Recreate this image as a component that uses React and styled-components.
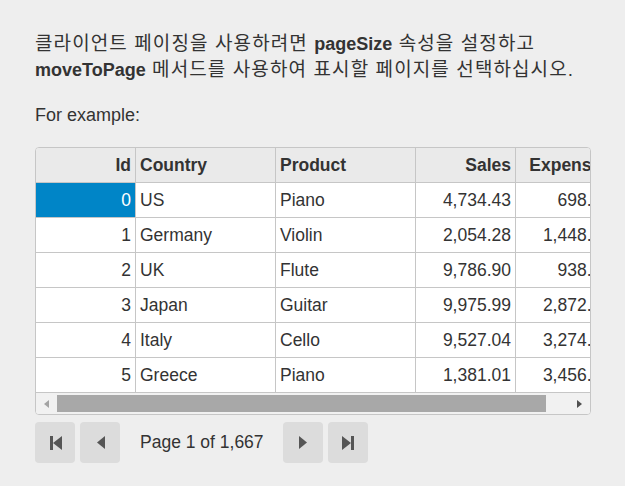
import React from 'react';
import styled, { createGlobalStyle } from 'styled-components';

const GlobalStyle = createGlobalStyle`
  html, body {
    margin: 0;
    background: #eeeeee;
  }
  body {
    font-family: "Liberation Sans", "Noto Sans CJK KR", sans-serif;
    color: #333333;
  }
`;

const Page = styled.div`
  width: 556px;
  padding: 31px 0 0 35px;
`;

const Para = styled.p`
  margin: 0 0 ${p => p.$gap}px;
  font-size: 18px;
  line-height: 25px;
`;

const Ko = styled.span`
  font-size: 19px;
  letter-spacing: 1.1px;
`;

const Grid = styled.div`
  border: 1px solid #c6c6c6;
  border-radius: 4px;
  background: #ffffff;
  overflow: hidden;
  font-size: 17.5px;
`;

const Viewport = styled.div`
  overflow: hidden;
`;

const Row = styled.div`
  display: flex;
  width: 580px;
  height: 35px;
  box-sizing: border-box;
  border-bottom: 1px solid #c6c6c6;
  background: ${p => (p.$header ? '#eaeaea' : '#ffffff')};
  font-weight: ${p => (p.$header ? 'bold' : 'normal')};
`;

const Cell = styled.div`
  flex: 0 0 ${p => p.$w}px;
  box-sizing: border-box;
  border-right: 1px solid #c6c6c6;
  padding: 0 4px;
  line-height: 34px;
  white-space: nowrap;
  overflow: hidden;
  text-align: ${p => (p.$right ? 'right' : 'left')};
  background: ${p => (p.$selected ? '#0085c7' : 'transparent')};
  color: ${p => (p.$selected ? '#ffffff' : 'inherit')};
`;

const ScrollBar = styled.div`
  display: flex;
  height: 21px;
  background: #f1f1f1;
`;

const ScrollArrow = styled.div`
  flex: 0 0 21px;
  display: flex;
  align-items: center;
  justify-content: center;
`;

const Track = styled.div`
  flex: 1;
  padding-top: 2px;
`;

const Thumb = styled.div`
  height: 17px;
  background: #a8a8a8;
`;

const Pager = styled.div`
  display: flex;
  align-items: center;
  gap: 5px;
  margin-top: 7px;
`;

const PagerButton = styled.button`
  width: 40px;
  height: 41px;
  padding: 0 0 0 1px;
  border: none;
  border-radius: 4px;
  background: #dcdcdc;
  color: #555555;
  display: flex;
  align-items: center;
  justify-content: center;
`;

const PageLabel = styled.span`
  padding: 0 14px 0 15px;
  font-size: 17.5px;
  color: #333333;
`;

const columns = [
  { key: 'id', title: 'Id', w: 100, right: true },
  { key: 'country', title: 'Country', w: 140 },
  { key: 'product', title: 'Product', w: 140 },
  { key: 'sales', title: 'Sales', w: 100, right: true },
  { key: 'expenses', title: 'Expenses', w: 100, right: true },
];

const data = [
  { id: 0, country: 'US', product: 'Piano', sales: '4,734.43', expenses: '698.57' },
  { id: 1, country: 'Germany', product: 'Violin', sales: '2,054.28', expenses: '1,448.32' },
  { id: 2, country: 'UK', product: 'Flute', sales: '9,786.90', expenses: '938.14' },
  { id: 3, country: 'Japan', product: 'Guitar', sales: '9,975.99', expenses: '2,872.65' },
  { id: 4, country: 'Italy', product: 'Cello', sales: '9,527.04', expenses: '3,274.81' },
  { id: 5, country: 'Greece', product: 'Piano', sales: '1,381.01', expenses: '3,456.20' },
];

const viewportWidth = 554;
const contentWidth = columns.reduce((s, c) => s + c.w, 0);

const Icon = ({ kind }) => {
  if (kind === 'first')
    return (
      <svg width="12" height="14" viewBox="0 0 12 14" fill="currentColor">
        <rect x="0" y="0" width="3" height="14" />
        <polygon points="12,0 3,7 12,14" />
      </svg>
    );
  if (kind === 'last')
    return (
      <svg width="12" height="14" viewBox="0 0 12 14" fill="currentColor">
        <polygon points="0,0 9,7 0,14" />
        <rect x="9" y="0" width="3" height="14" />
      </svg>
    );
  if (kind === 'prev')
    return (
      <svg width="8" height="13" viewBox="0 0 8 13" fill="currentColor">
        <polygon points="8,0 0,6.5 8,13" />
      </svg>
    );
  return (
    <svg width="8" height="13" viewBox="0 0 8 13" fill="currentColor">
      <polygon points="0,0 8,6.5 0,13" />
    </svg>
  );
};

export default function App() {
  return (
    <Page>
      <GlobalStyle />
      <Para $gap={20}>
        <Ko>클라이언트 페이징을 사용하려면 </Ko>
        <b>pageSize</b>
        <Ko> 속성을 설정하고 </Ko>
        <b>moveToPage</b>
        <Ko> 메서드를 사용하여 표시할 페이지를 선택하십시오.</Ko>
      </Para>
      <Para $gap={19}>For example:</Para>

      <Grid>
        <Viewport>
          <Row $header>
            {columns.map(c => (
              <Cell key={c.key} $w={c.w} $right={c.right}>{c.title}</Cell>
            ))}
          </Row>
          {data.map((r, i) => (
            <Row key={r.id}>
              {columns.map((c, j) => (
                <Cell key={c.key} $w={c.w} $right={c.right} $selected={i === 0 && j === 0}>
                  {r[c.key]}
                </Cell>
              ))}
            </Row>
          ))}
        </Viewport>
        <ScrollBar>
          <ScrollArrow>
            <svg width="5" height="8" viewBox="0 0 5 8"><polygon points="5,0 0,4 5,8" fill="#a3a3a3" /></svg>
          </ScrollArrow>
          <Track>
            <Thumb style={{ width: `${(viewportWidth / contentWidth) * 100}%` }} />
          </Track>
          <ScrollArrow>
            <svg width="5" height="8" viewBox="0 0 5 8"><polygon points="0,0 5,4 0,8" fill="#505050" /></svg>
          </ScrollArrow>
        </ScrollBar>
      </Grid>

      <Pager>
        <PagerButton><Icon kind="first" /></PagerButton>
        <PagerButton><Icon kind="prev" /></PagerButton>
        <PageLabel>Page 1 of 1,667</PageLabel>
        <PagerButton><Icon kind="next" /></PagerButton>
        <PagerButton><Icon kind="last" /></PagerButton>
      </Pager>
    </Page>
  );
}
